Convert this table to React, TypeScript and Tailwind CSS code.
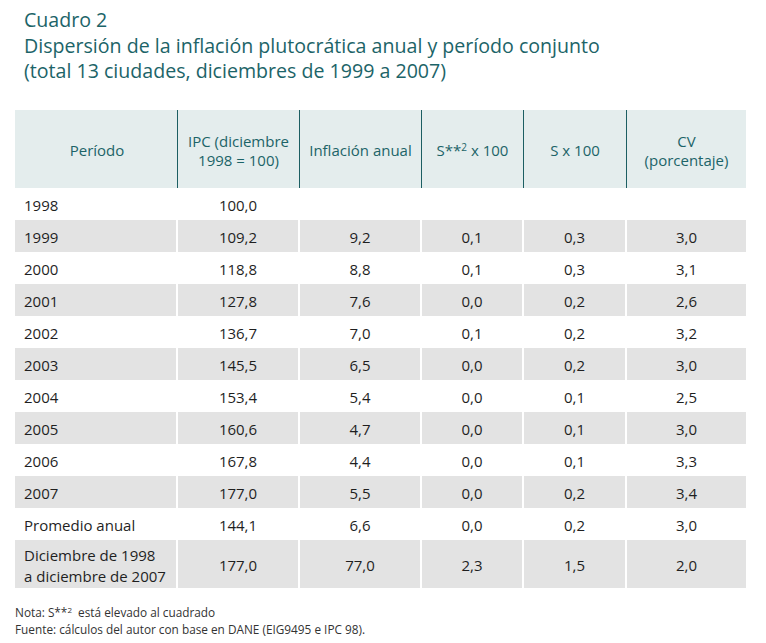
const rows: [string, string, string, string, string, string][] = [
  ["1998", "100,0", "", "", "", ""],
  ["1999", "109,2", "9,2", "0,1", "0,3", "3,0"],
  ["2000", "118,8", "8,8", "0,1", "0,3", "3,1"],
  ["2001", "127,8", "7,6", "0,0", "0,2", "2,6"],
  ["2002", "136,7", "7,0", "0,1", "0,2", "3,2"],
  ["2003", "145,5", "6,5", "0,0", "0,2", "3,0"],
  ["2004", "153,4", "5,4", "0,0", "0,1", "2,5"],
  ["2005", "160,6", "4,7", "0,0", "0,1", "3,0"],
  ["2006", "167,8", "4,4", "0,0", "0,1", "3,3"],
  ["2007", "177,0", "5,5", "0,0", "0,2", "3,4"],
  ["Promedio anual", "144,1", "6,6", "0,0", "0,2", "3,0"],
];

const font = { fontFamily: '"Open Sans", "Noto Sans", sans-serif' };

function Row({ cells, shaded, tall }: { cells: string[]; shaded: boolean; tall?: boolean }) {
  return (
    <div
      className={`grid grid-cols-[161px_120px_120px_100px_101px_119px] gap-x-[2px] ${tall ? "h-[48px] leading-[21px]" : "h-[32px] leading-[19px]"}`}
    >
      {cells.map((c, i) => (
        <div
          key={i}
          className={`flex items-center whitespace-pre-line pt-[3px] ${i === 0 ? "justify-start pl-[9px]" : "justify-center"} ${shaded ? "bg-[#e3e3e3]" : "bg-white"}`}
        >
          {c}
        </div>
      ))}
    </div>
  );
}

export default function App() {
  return (
    <div className="w-[766px] h-[643px] bg-white text-[#1f1f1f]" style={font}>
      <div className="pl-[24px] pt-[7px] h-[110px] text-[19.6px] leading-[25.5px] text-[#1c6468]">
        <div>Cuadro 2</div>
        <div>Dispersión de la inflación plutocrática anual y período conjunto</div>
        <div>(total 13 ciudades, diciembres de 1999 a 2007)</div>
      </div>

      <div className="ml-[15px] w-[731px] text-[15px]">
        <div className="flex h-[78px] bg-[#e4eded] text-[#1c6468] text-center leading-[19px]">
          <div className="w-[162px] flex items-center justify-center pl-[2px] pt-[3px]">Período</div>
          <div className="w-[122px] flex items-center justify-center pt-[3px] border-l border-[#1c5e62]">
            IPC (diciembre
            <br />
            1998 = 100)
          </div>
          <div className="w-[122px] flex items-center justify-center pt-[3px] border-l border-[#1c5e62]">Inflación anual</div>
          <div className="w-[102px] flex items-center justify-center pt-[3px] border-l border-[#1c5e62]">
            S**<sup className="text-[10px] -top-[0.4em]">2</sup>&nbsp;x 100
          </div>
          <div className="w-[103px] flex items-center justify-center pt-[3px] border-l border-[#1c5e62]">S x 100</div>
          <div className="w-[120px] flex items-center justify-center pt-[3px] border-l border-[#1c5e62]">
            CV
            <br />
            (porcentaje)
          </div>
        </div>

        {rows.map((r, i) => (
          <Row key={r[0]} cells={r} shaded={i % 2 === 1} />
        ))}
        <Row
          cells={["Diciembre de 1998\na diciembre de 2007", "177,0", "77,0", "2,3", "1,5", "2,0"]}
          shaded
          tall
        />
      </div>

      <div className="ml-[15px] mt-[16px] text-[11.8px] leading-[17px] text-[#333]">
        <div>
          Nota: S**<sup className="text-[8px] -top-[0.5em]">2</sup>&nbsp; está elevado al cuadrado
        </div>
        <div>Fuente: cálculos del autor con base en DANE (EIG9495 e IPC 98).</div>
      </div>
    </div>
  );
}
